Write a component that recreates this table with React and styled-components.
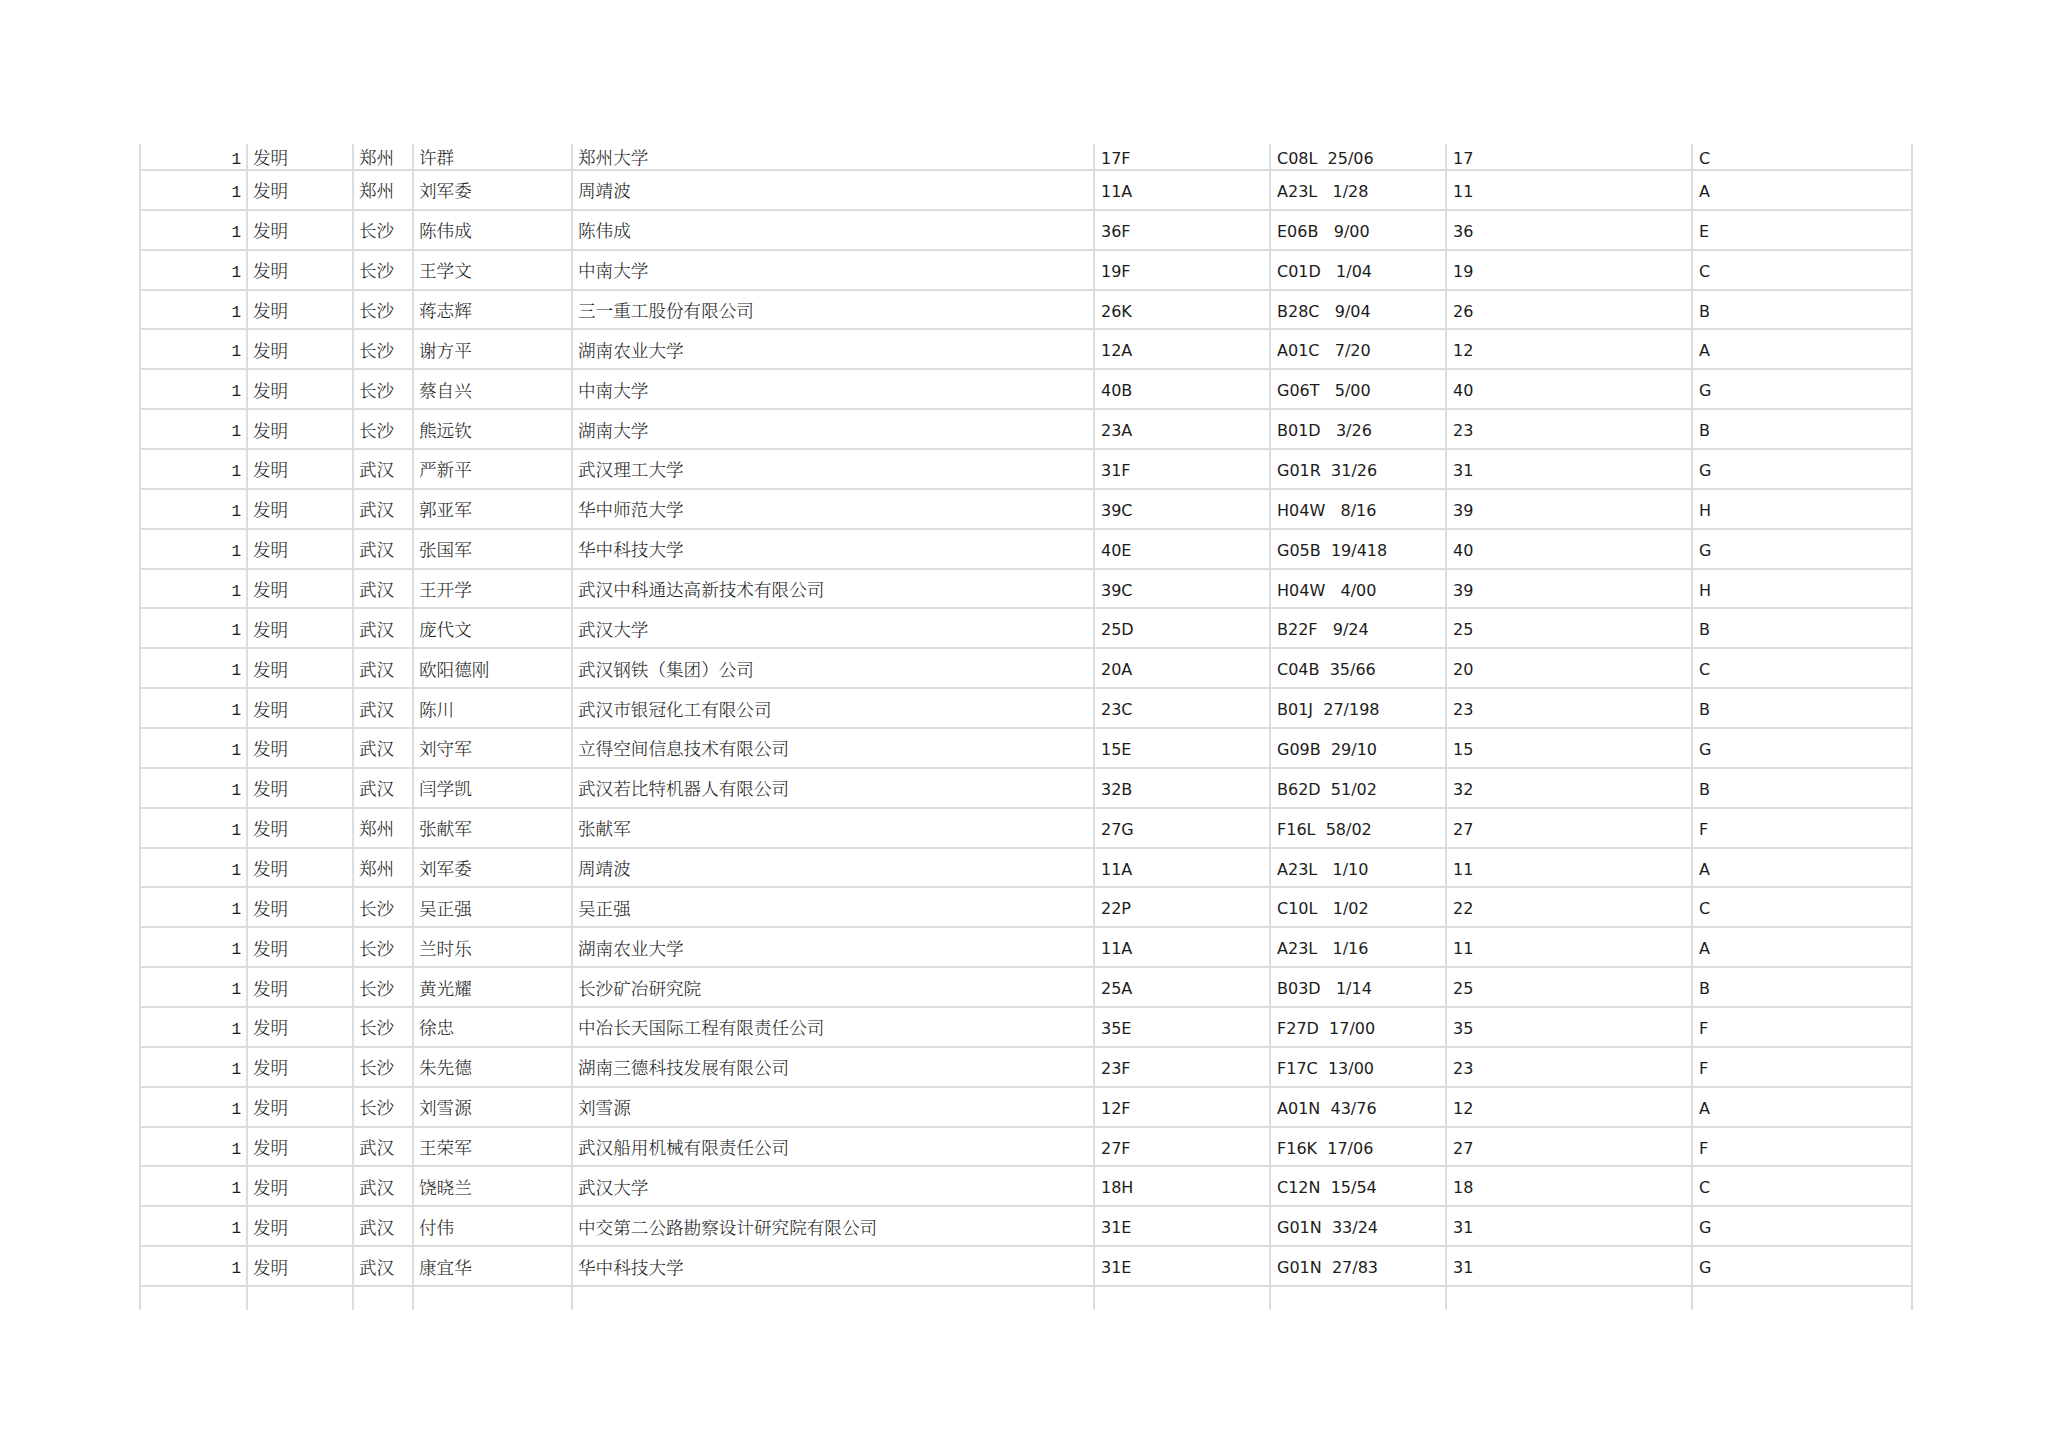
import React from "react";
import styled, { createGlobalStyle } from "styled-components";

const Global = createGlobalStyle`
  html, body { margin: 0; padding: 0; background: #ffffff; }
  body { width: 2048px; height: 1447px; overflow: hidden; }
`;

const rows = [
  ["郑州", "许群", "郑州大学", "17F", "C08L  25/06", "17", "C"],
  ["郑州", "刘军委", "周靖波", "11A", "A23L   1/28", "11", "A"],
  ["长沙", "陈伟成", "陈伟成", "36F", "E06B   9/00", "36", "E"],
  ["长沙", "王学文", "中南大学", "19F", "C01D   1/04", "19", "C"],
  ["长沙", "蒋志辉", "三一重工股份有限公司", "26K", "B28C   9/04", "26", "B"],
  ["长沙", "谢方平", "湖南农业大学", "12A", "A01C   7/20", "12", "A"],
  ["长沙", "蔡自兴", "中南大学", "40B", "G06T   5/00", "40", "G"],
  ["长沙", "熊远钦", "湖南大学", "23A", "B01D   3/26", "23", "B"],
  ["武汉", "严新平", "武汉理工大学", "31F", "G01R  31/26", "31", "G"],
  ["武汉", "郭亚军", "华中师范大学", "39C", "H04W   8/16", "39", "H"],
  ["武汉", "张国军", "华中科技大学", "40E", "G05B  19/418", "40", "G"],
  ["武汉", "王开学", "武汉中科通达高新技术有限公司", "39C", "H04W   4/00", "39", "H"],
  ["武汉", "庞代文", "武汉大学", "25D", "B22F   9/24", "25", "B"],
  ["武汉", "欧阳德刚", "武汉钢铁（集团）公司", "20A", "C04B  35/66", "20", "C"],
  ["武汉", "陈川", "武汉市银冠化工有限公司", "23C", "B01J  27/198", "23", "B"],
  ["武汉", "刘守军", "立得空间信息技术有限公司", "15E", "G09B  29/10", "15", "G"],
  ["武汉", "闫学凯", "武汉若比特机器人有限公司", "32B", "B62D  51/02", "32", "B"],
  ["郑州", "张献军", "张献军", "27G", "F16L  58/02", "27", "F"],
  ["郑州", "刘军委", "周靖波", "11A", "A23L   1/10", "11", "A"],
  ["长沙", "吴正强", "吴正强", "22P", "C10L   1/02", "22", "C"],
  ["长沙", "兰时乐", "湖南农业大学", "11A", "A23L   1/16", "11", "A"],
  ["长沙", "黄光耀", "长沙矿冶研究院", "25A", "B03D   1/14", "25", "B"],
  ["长沙", "徐忠", "中冶长天国际工程有限责任公司", "35E", "F27D  17/00", "35", "F"],
  ["长沙", "朱先德", "湖南三德科技发展有限公司", "23F", "F17C  13/00", "23", "F"],
  ["长沙", "刘雪源", "刘雪源", "12F", "A01N  43/76", "12", "A"],
  ["武汉", "王荣军", "武汉船用机械有限责任公司", "27F", "F16K  17/06", "27", "F"],
  ["武汉", "饶晓兰", "武汉大学", "18H", "C12N  15/54", "18", "C"],
  ["武汉", "付伟", "中交第二公路勘察设计研究院有限公司", "31E", "G01N  33/24", "31", "G"],
  ["武汉", "康宜华", "华中科技大学", "31E", "G01N  27/83", "31", "G"],
];

const Page = styled.div`
  padding: 144px 0 0 139px;
`;

const Sheet = styled.div`
  display: flex;
  flex-direction: column;
  width: 1774px;
`;

const Row = styled.div`
  display: grid;
  grid-template-columns: 107px 106px 60px 159px 522px 176px 176px 246px 222px;
  box-sizing: border-box;
  height: ${(p) => p.$h}px;
  border-bottom: ${(p) => (p.$last ? "none" : "2px solid #dcdcdc")};
`;

const Cell = styled.div`
  box-sizing: border-box;
  display: flex;
  align-items: center;
  justify-content: ${(p) => (p.$right ? "flex-end" : "flex-start")};
  border-left: 2px solid #dcdcdc;
  border-right: ${(p) => (p.$end ? "2px solid #dcdcdc" : "none")};
  padding: 0 5px;
  color: #1c1c1c;
  white-space: pre;
  overflow: hidden;
`;

const Num = styled(Cell)`
  font-family: "Liberation Mono", "DejaVu Sans Mono", monospace;
  font-size: 16px;
  padding-right: 5px;
  padding-top: 6px;
`;

const Han = styled(Cell)`
  font-family: "Noto Serif CJK SC", "Noto Sans CJK SC", "Noto Sans", sans-serif;
  font-size: 17.6px;
  font-weight: 300;
  padding-left: 5px;
`;

const Latin = styled(Cell)`
  font-family: "DejaVu Sans", Verdana, sans-serif;
  font-size: 16px;
  padding-left: 6px;
  padding-top: 3px;
`;

function DataRow({ r, h }) {
  const [city, person, org, code, ipc, cls, sec] = r;
  return (
    <Row $h={h}>
      <Num $right>1</Num>
      <Han>发明</Han>
      <Han>{city}</Han>
      <Han>{person}</Han>
      <Han>{org}</Han>
      <Latin>{code}</Latin>
      <Latin>{ipc}</Latin>
      <Latin>{cls}</Latin>
      <Latin $end>{sec}</Latin>
    </Row>
  );
}

export default function App() {
  return (
    <>
      <Global />
      <Page>
        <Sheet>
          {rows.map((r, i) => (
            <DataRow key={i} r={r} h={i === 0 ? 27 : 39.86} />
          ))}
          <Row $h={23} $last>
            <Num />
            <Han />
            <Han />
            <Han />
            <Han />
            <Latin />
            <Latin />
            <Latin />
            <Latin $end />
          </Row>
        </Sheet>
      </Page>
    </>
  );
}
